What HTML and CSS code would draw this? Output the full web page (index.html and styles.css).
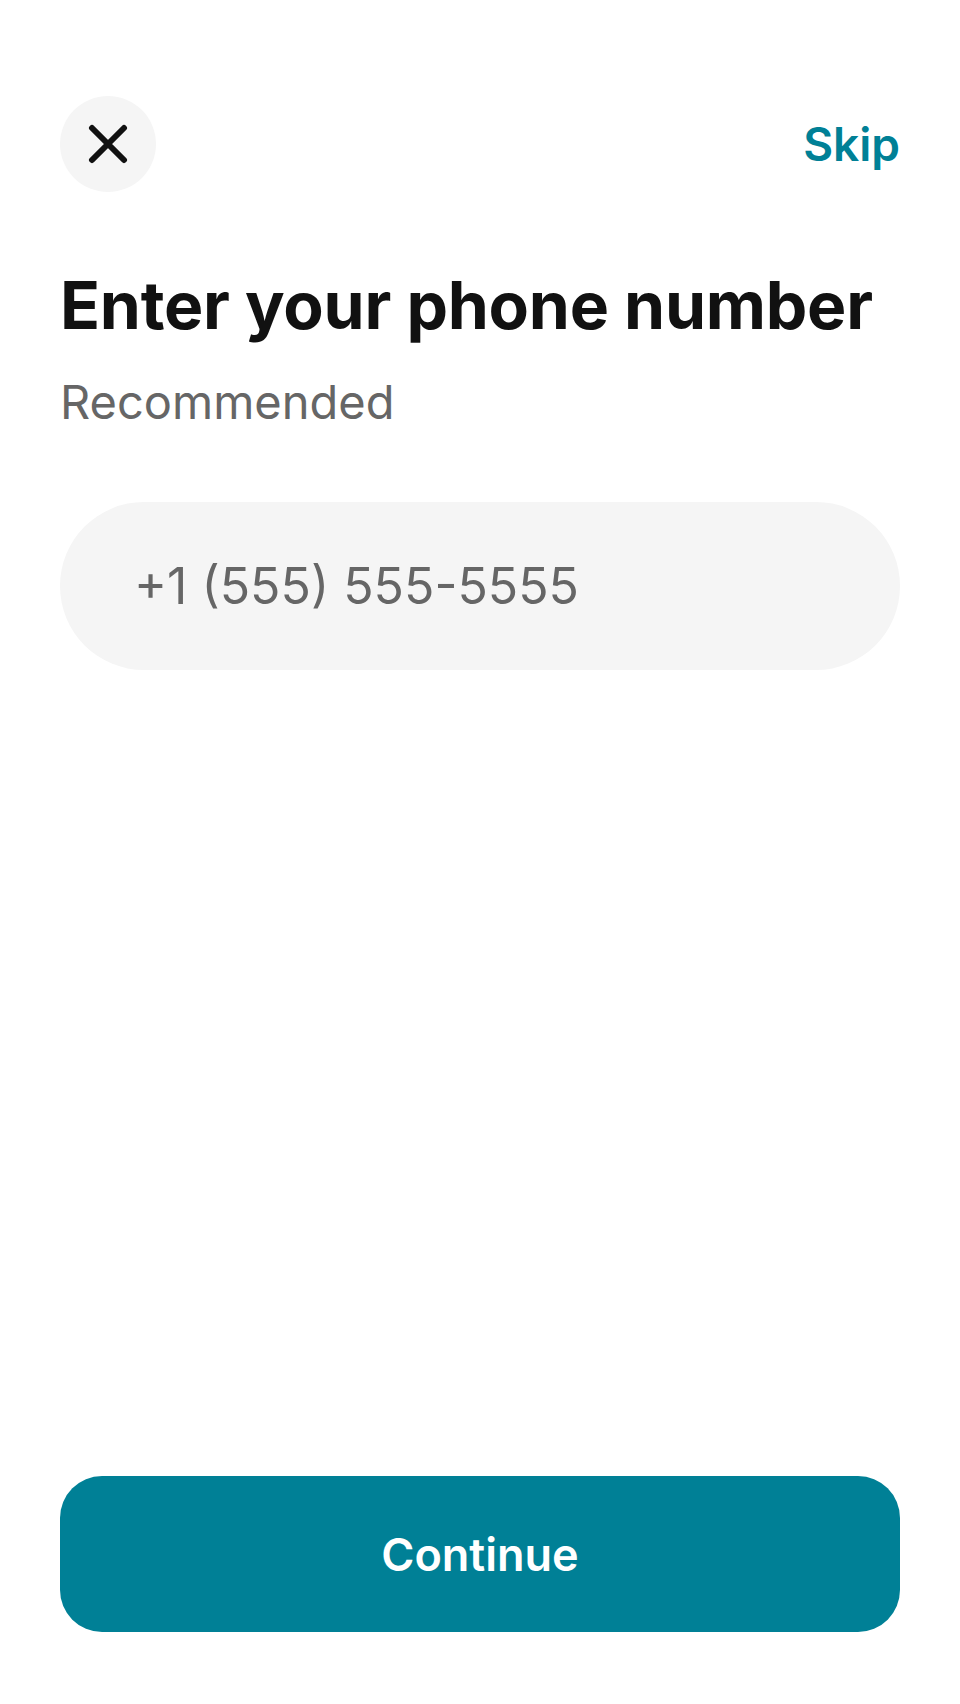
FILE: index.html
```html
<!DOCTYPE html>
<html>
<head>
<meta charset="utf-8">
<link rel="stylesheet" href="styles.css">
</head>
<body>
<div class="screen">
  <header class="topbar">
    <button class="close" aria-label="Close">
      <svg width="40" height="40" viewBox="0 0 40 40"><path d="M4 4 L36 36 M36 4 L4 36" stroke="#111" stroke-width="6" stroke-linecap="round" fill="none"/></svg>
    </button>
    <a class="skip">Skip</a>
  </header>
  <main class="content">
    <h1 class="title">Enter your phone number</h1>
    <p class="subtitle">Recommended</p>
    <div class="field">
      <span class="placeholder">+1 (555) 555-5555</span>
    </div>
  </main>
  <footer class="footer">
    <button class="continue">Continue</button>
  </footer>
</div>
</body>
</html>
```
FILE: styles.css
```css
* { box-sizing: border-box; }
html, body { margin: 0; padding: 0; background: #fff; }
body { font-family: Inter, "Noto Sans", sans-serif; }
.screen {
  width: 960px;
  height: 1704px;
  padding: 96px 60px 72px;
  display: flex;
  flex-direction: column;
}
.topbar {
  display: flex;
  justify-content: space-between;
  align-items: center;
  height: 96px;
}
.close {
  width: 96px;
  height: 96px;
  border-radius: 50%;
  border: none;
  background: #f5f5f5;
  display: flex;
  align-items: center;
  justify-content: center;
  padding: 0;
}
.skip {
  font-size: 46px;
  font-weight: 600;
  color: #008096;
}
.content { flex: 1; }
.title {
  margin: 73px 0 0;
  font-size: 66px;
  font-weight: 700;
  color: #111;
  line-height: 80px;
  letter-spacing: -0.25px;
}
.subtitle {
  margin: 29px 0 0;
  font-size: 47px;
  color: #666;
  line-height: 56px;
}
.field {
  margin-top: 72px;
  height: 168px;
  border-radius: 84px;
  background: #f5f5f5;
  display: flex;
  align-items: center;
  padding-left: 74px;
}
.placeholder {
  font-size: 50px;
  color: #666;
}
.continue {
  width: 100%;
  height: 156px;
  border: none;
  border-radius: 42px;
  background: #008096;
  color: #fff;
  font-family: Inter, sans-serif;
  font-size: 45px;
  font-weight: 600;
}
```
